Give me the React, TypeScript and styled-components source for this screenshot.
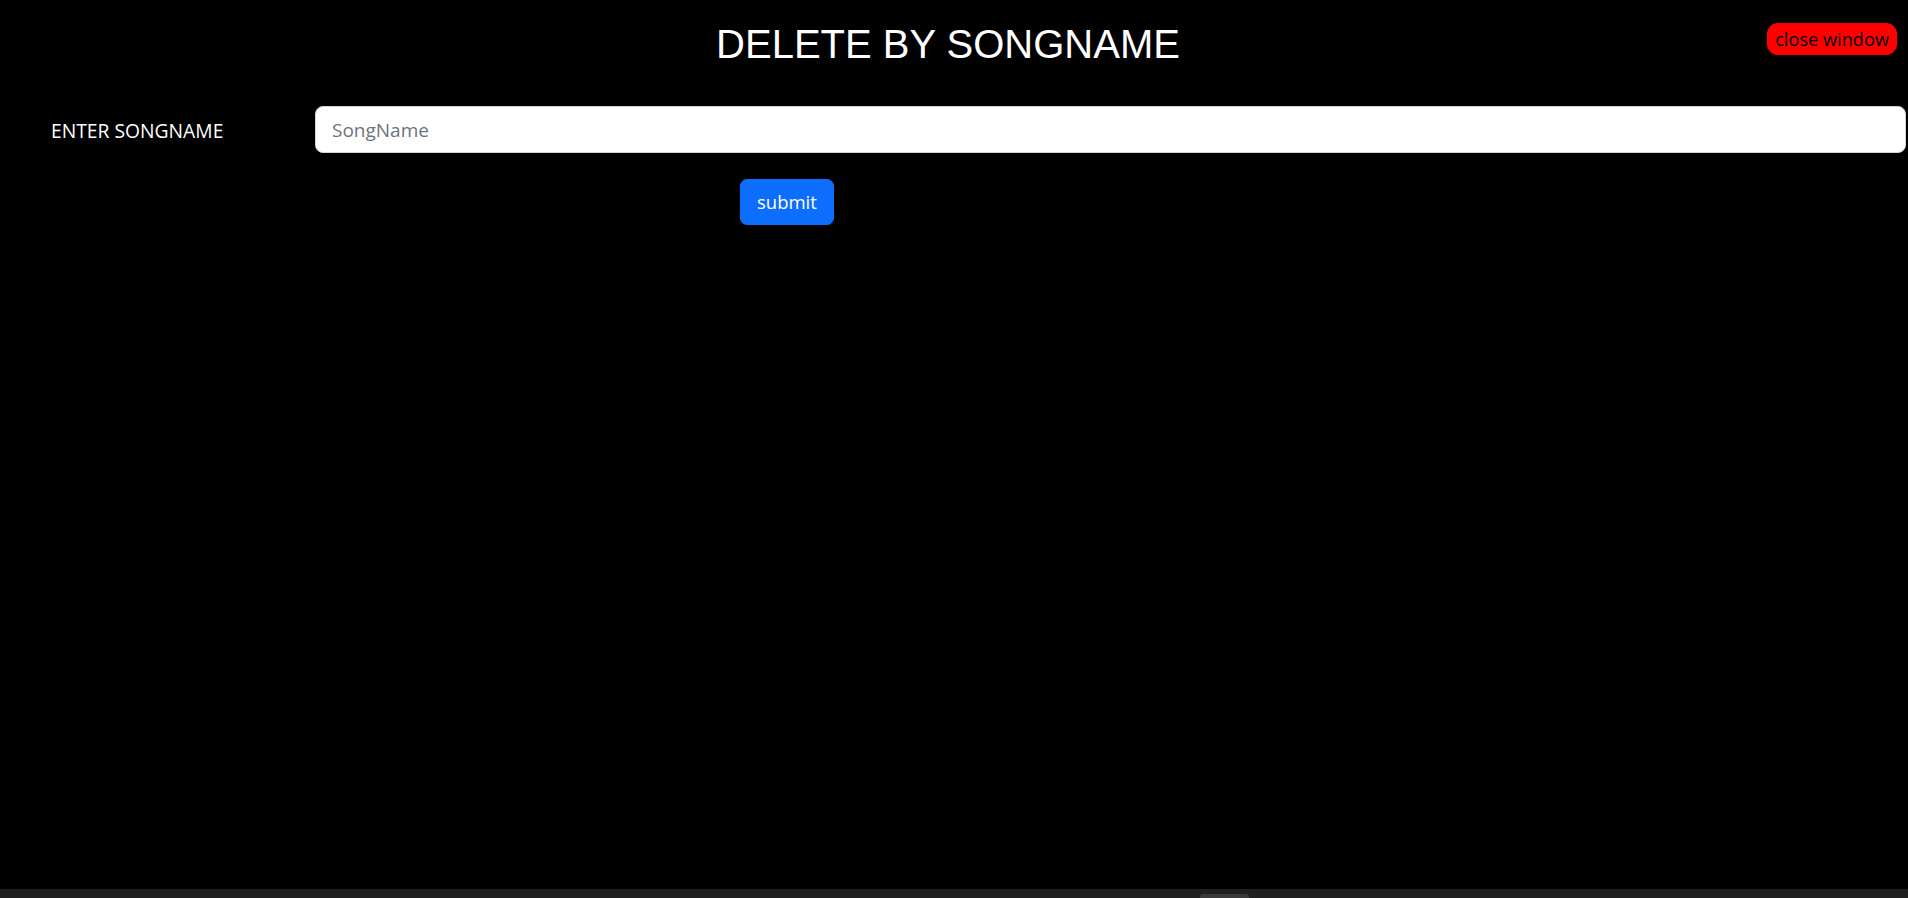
import React from "react";
import styled, { createGlobalStyle } from "styled-components";

const GlobalStyle = createGlobalStyle`
  html, body {
    margin: 0;
    padding: 0;
    background: #000000;
    overflow: hidden;
  }
  * { box-sizing: border-box; }
`;

const Page = styled.div`
  display: flex;
  flex-direction: column;
  height: 100vh;
  width: 100%;
  background: #000000;
  font-family: "Open Sans", "Noto Sans", sans-serif;
`;

const Main = styled.main`
  flex: 1;
  display: flex;
  flex-direction: column;
`;

const Header = styled.header`
  position: relative;
  padding-top: 20px;
  padding-right: 12px;
`;

const Title = styled.h1`
  margin: 0;
  text-align: center;
  font-family: "Liberation Sans", Arial, sans-serif;
  font-weight: 400;
  font-size: 40px;
  line-height: 48px;
  color: #ffffff;
`;

const CloseButton = styled.button`
  position: absolute;
  top: 23px;
  right: 11px;
  height: 32px;
  padding: 1px 8px 0;
  border: none;
  border-radius: 11px;
  background: #ff0000;
  color: #000000;
  font-family: "Open Sans", "Noto Sans", sans-serif;
  font-size: 18.2px;
  line-height: 31px;
  cursor: pointer;
`;

const FormRow = styled.div`
  display: flex;
  align-items: center;
  margin-top: 38px;
  padding-right: 2px;
`;

const Label = styled.label`
  flex: 0 0 315px;
  padding-left: 51px;
  color: #ffffff;
  font-size: 19.3px;
  line-height: 28px;
  padding-top: 3px;
`;

const TextInput = styled.input`
  flex: 1;
  min-width: 0;
  height: 47px;
  padding: 8px 16px;
  border: 1px solid #ced4da;
  border-radius: 8px;
  background: #ffffff;
  color: #212529;
  font-family: "Open Sans", "Noto Sans", sans-serif;
  font-size: 19px;
  outline: none;
  &::placeholder {
    color: #6c757d;
  }
`;

const SubmitRow = styled.div`
  display: flex;
  padding-left: 740px;
  margin-top: 26px;
`;

const SubmitButton = styled.button`
  height: 46px;
  padding: 0 16px;
  border: 1px solid #0d6efd;
  border-radius: 7px;
  background: #0d6efd;
  color: #ffffff;
  font-family: "Open Sans", "Noto Sans", sans-serif;
  font-size: 18.5px;
  line-height: 44px;
  cursor: pointer;
`;

const ScrollTrack = styled.div`
  flex: 0 0 9px;
  background: #202020;
  display: flex;
  align-items: flex-end;
  padding-left: 1200px;
`;

const ScrollThumb = styled.div`
  width: 49px;
  height: 4px;
  background: #3a3a3a;
  border-radius: 3px 3px 0 0;
`;

export default function App() {
  return (
    <>
      <GlobalStyle />
      <Page>
        <Main>
          <Header>
            <Title>DELETE BY SONGNAME</Title>
            <CloseButton>close window</CloseButton>
          </Header>
          <FormRow>
            <Label htmlFor="songname">ENTER SONGNAME</Label>
            <TextInput id="songname" type="text" placeholder="SongName" />
          </FormRow>
          <SubmitRow>
            <SubmitButton type="submit">submit</SubmitButton>
          </SubmitRow>
        </Main>
        <ScrollTrack>
          <ScrollThumb />
        </ScrollTrack>
      </Page>
    </>
  );
}
